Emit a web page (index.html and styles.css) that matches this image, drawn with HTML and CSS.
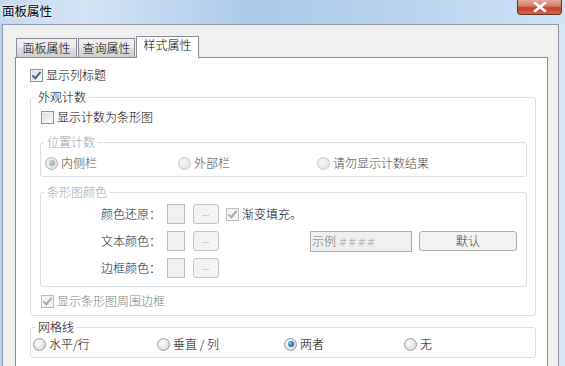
FILE: index.html
```html
<!DOCTYPE html>
<html lang="zh-CN">
<head>
    <meta charset="UTF-8">
    <title>面板属性</title>
    <link rel="stylesheet" href="styles.css">
</head>
<body>
<div class="window">
    <div class="titlebar">
        <span class="title">面板属性</span>
        <span class="close">
            <svg width="16" height="10" viewBox="0 0 16 10"><path d="M3 1 L13 9 M13 1 L3 9" stroke="#fff" stroke-width="2.6" stroke-linecap="square"/></svg>
        </span>
    </div>
    <div class="client">
        <div class="tabs">
            <div class="tab tab-1">面板属性</div>
            <div class="tab tab-2">查询属性</div>
            <div class="tab active">样式属性</div>
        </div>
        <div class="panel">
            <label class="row top-row"><span class="chk checked"></span>显示列标题</label>

            <fieldset class="group outer">
                <legend>外观计数</legend>
                <label class="row bar-row"><span class="chk"></span>显示计数为条形图</label>

                <fieldset class="group sub position">
                    <legend>位置计数</legend>
                    <div class="radios pos-radios">
                        <label class="row dim"><span class="radio sel-off"></span>内侧栏</label>
                        <label class="row dim"><span class="radio off"></span>外部栏</label>
                        <label class="row dim"><span class="radio off"></span>请勿显示计数结果</label>
                    </div>
                </fieldset>

                <fieldset class="group sub colors">
                    <legend>条形图颜色</legend>
                    <div class="color-row">
                        <span class="clabel">颜色还原：</span>
                        <span class="swatch"></span>
                        <span class="dots">...</span>
                        <label class="row grad"><span class="chk checked off"></span>渐变填充。</label>
                    </div>
                    <div class="color-row">
                        <span class="clabel">文本颜色：</span>
                        <span class="swatch"></span>
                        <span class="dots">...</span>
                        <span class="sample">示例 <em>####</em></span>
                        <span class="btn">默认</span>
                    </div>
                    <div class="color-row">
                        <span class="clabel">边框颜色：</span>
                        <span class="swatch"></span>
                        <span class="dots">...</span>
                    </div>
                </fieldset>

                <label class="row border-row"><span class="chk checked off"></span>显示条形图周围边框</label>
            </fieldset>

            <fieldset class="group outer grid">
                <legend>网格线</legend>
                <div class="radios grid-radios">
                    <label class="row"><span class="radio"></span>水平/行</label>
                    <label class="row"><span class="radio"></span>垂直 / 列</label>
                    <label class="row"><span class="radio on"></span>两者</label>
                    <label class="row"><span class="radio"></span>无</label>
                </div>
            </fieldset>
        </div>
    </div>
</div>
</body>
</html>
```

FILE: styles.css
```css
* {
    box-sizing: border-box;
}
body {
    margin: 0;
    font-family: "Noto Sans CJK SC", "DejaVu Sans", sans-serif;
    font-size: 12px;
    font-weight: 300;
    line-height: 14px;
    color: #000;
    overflow: hidden;
}
.window {
    width: 565px;
    height: 366px;
    background: linear-gradient(to right, #b9d1ec, #cfe0f3 40%, #d7e6f5);
    overflow: hidden;
}
.titlebar {
    height: 24px;
    display: flex;
    align-items: flex-start;
    background: linear-gradient(to right, #c2d8f0 0%, #d4e4f5 15%, #a9c8ea 45%, #b6d2ee 70%, #d0e3f6 100%);
}
.title {
    margin: 4px 0 0 2px;
    font-size: 12.5px;
    font-weight: 400;
    text-shadow: 0 0 6px #fff, 0 0 3px #fff;
}
.close {
    margin-left: auto;
    margin-right: 3px;
    width: 45px;
    height: 15px;
    border: 1px solid #6b2d22;
    border-top: none;
    border-radius: 0 0 4px 4px;
    background: linear-gradient(to bottom, #e8a89b 0%, #d67a66 45%, #c2402a 55%, #d5654c 100%);
    display: flex;
    align-items: center;
    justify-content: center;
}
.client {
    margin: 0 6px 0 2px;
    height: 342px;
    border: 1px solid #8d99a6;
    border-bottom: none;
    background: #f0f0f0;
    padding: 12px 10px 0 12px;
}
.tabs {
    display: flex;
    align-items: flex-end;
    height: 20px;
    padding-left: 1px;
    position: relative;
    z-index: 1;
}
.tab {
    height: 19px;
    border: 1px solid #898c95;
    border-bottom: none;
    background: linear-gradient(to bottom, #f3f3f3, #ebebeb 50%, #dddddd 51%, #cfcfcf);
    text-align: center;
    padding-top: 2px;
}
.tab-1 {
    width: 61px;
}
.tab-2 {
    width: 57px;
    margin-left: 1px;
}
.tab.active {
    width: 63px;
    height: 22px;
    margin-left: 1px;
    margin-bottom: -1px;
    background: #fff;
    padding-top: 1px;
}
.panel {
    height: 320px;
    border: 1px solid #898c95;
    background: #fff;
    padding: 10px 11px 0 14px;
}
.row {
    display: flex;
    align-items: center;
    height: 14px;
    gap: 3px;
    white-space: nowrap;
}
.chk {
    width: 13px;
    height: 13px;
    border: 1px solid #8e8f8f;
    background: linear-gradient(135deg, #d6d6d6, #f4f4f4 70%, #fff);
    box-shadow: inset 0 0 0 1px #f4f4f4;
    flex: none;
    position: relative;
}
.chk.checked::after {
    content: "";
    position: absolute;
    left: 3px;
    top: 0px;
    width: 3px;
    height: 7px;
    border: solid #4a5f97;
    border-width: 0 2px 2px 0;
    transform: rotate(40deg);
}
.chk.off {
    border-color: #bcbcbc;
    background: #f4f4f4;
}
.chk.off::after {
    border-color: #a8a8a8;
}
.radio {
    width: 13px;
    height: 13px;
    border-radius: 50%;
    border: 1px solid #9a9a9a;
    background: radial-gradient(circle at 40% 40%, #fff, #e2e2e2 60%, #cfcfcf);
    flex: none;
    display: flex;
    align-items: center;
    justify-content: center;
}
.radio.on::after {
    content: "";
    width: 6px;
    height: 6px;
    border-radius: 50%;
    background: radial-gradient(circle at 35% 35%, #8fd0f5, #1d6cb0 60%, #0d3f73);
}
.radio.off {
    border-color: #c8c8c8;
    background: radial-gradient(circle at 40% 40%, #fafafa, #e6e6e6 60%, #dadada);
}
.radio.sel-off {
    border-color: #b0b0b0;
    background: radial-gradient(circle at 40% 40%, #fafafa, #e6e6e6 60%, #dadada);
}
.radio.sel-off::after {
    content: "";
    width: 6px;
    height: 6px;
    border-radius: 50%;
    background: radial-gradient(circle at 35% 35%, #d0d0d0, #9a9a9a);
}
.dim {
    color: #4a4a4a;
}
.group {
    margin: 0;
    min-width: 0;
    border: 1px solid #d5dfe5;
    border-radius: 3px;
}
.group legend {
    padding: 0 3px;
    line-height: 14px;
}
.outer {
    margin-top: 8px;
    padding: 0 8px 7px 9px;
}
.outer > legend {
    margin-left: -5px;
}
.bar-row {
    margin: 6px 0 0 1px;
}
.sub {
    margin-top: 11px;
}
.sub legend {
    color: #a0a0a0;
}
.position {
    padding: 7px 0 6px 4px;
}
.position legend {
    margin-left: -1px;
}
.pos-radios {
    display: grid;
    grid-template-columns: 133px 139px auto;
}
.colors {
    margin-top: 8px;
    padding: 5px 0 8px 0;
    display: flex;
    flex-direction: column;
    gap: 7px;
}
.colors legend {
    margin-left: 3px;
}
.color-row {
    display: flex;
    align-items: center;
    height: 20px;
}
.clabel {
    width: 120px;
    text-align: right;
    color: #222;
}
.swatch {
    width: 18px;
    height: 20px;
    margin-left: 6px;
    border: 1px solid #b9b9b9;
    background: #f0f0f0;
}
.dots {
    width: 26px;
    height: 20px;
    margin-left: 8px;
    border: 1px solid #c2c2c2;
    border-radius: 3px;
    background: #f4f4f4;
    color: #8a8a8a;
    font-size: 9px;
    line-height: 16px;
    text-align: center;
}
.grad {
    margin-left: 7px;
}
.sample {
    width: 102px;
    height: 21px;
    margin-left: 91px;
    border: 1px solid #acacac;
    background: #f0f0f0;
    color: #6d6d6d;
    padding: 2px 0 0 1px;
}
.sample em {
    font-style: normal;
    color: #9a9a9a;
    font-family: "DejaVu Sans", sans-serif;
    font-size: 10px;
    letter-spacing: 1px;
}
.btn {
    width: 98px;
    height: 20px;
    margin-left: 7px;
    border: 1px solid #acacac;
    border-radius: 3px;
    background: #f3f3f3;
    color: #444;
    text-align: center;
    line-height: 18px;
}
.border-row {
    margin: 7px 0 0 1px;
    color: #808080;
}
.grid {
    margin-top: 4px;
    padding: 3px 0 6px 2px;
}
.grid > legend {
    margin-left: 2px;
}
.grid-radios {
    display: grid;
    grid-template-columns: 124px 127px 120px auto;
}
```
